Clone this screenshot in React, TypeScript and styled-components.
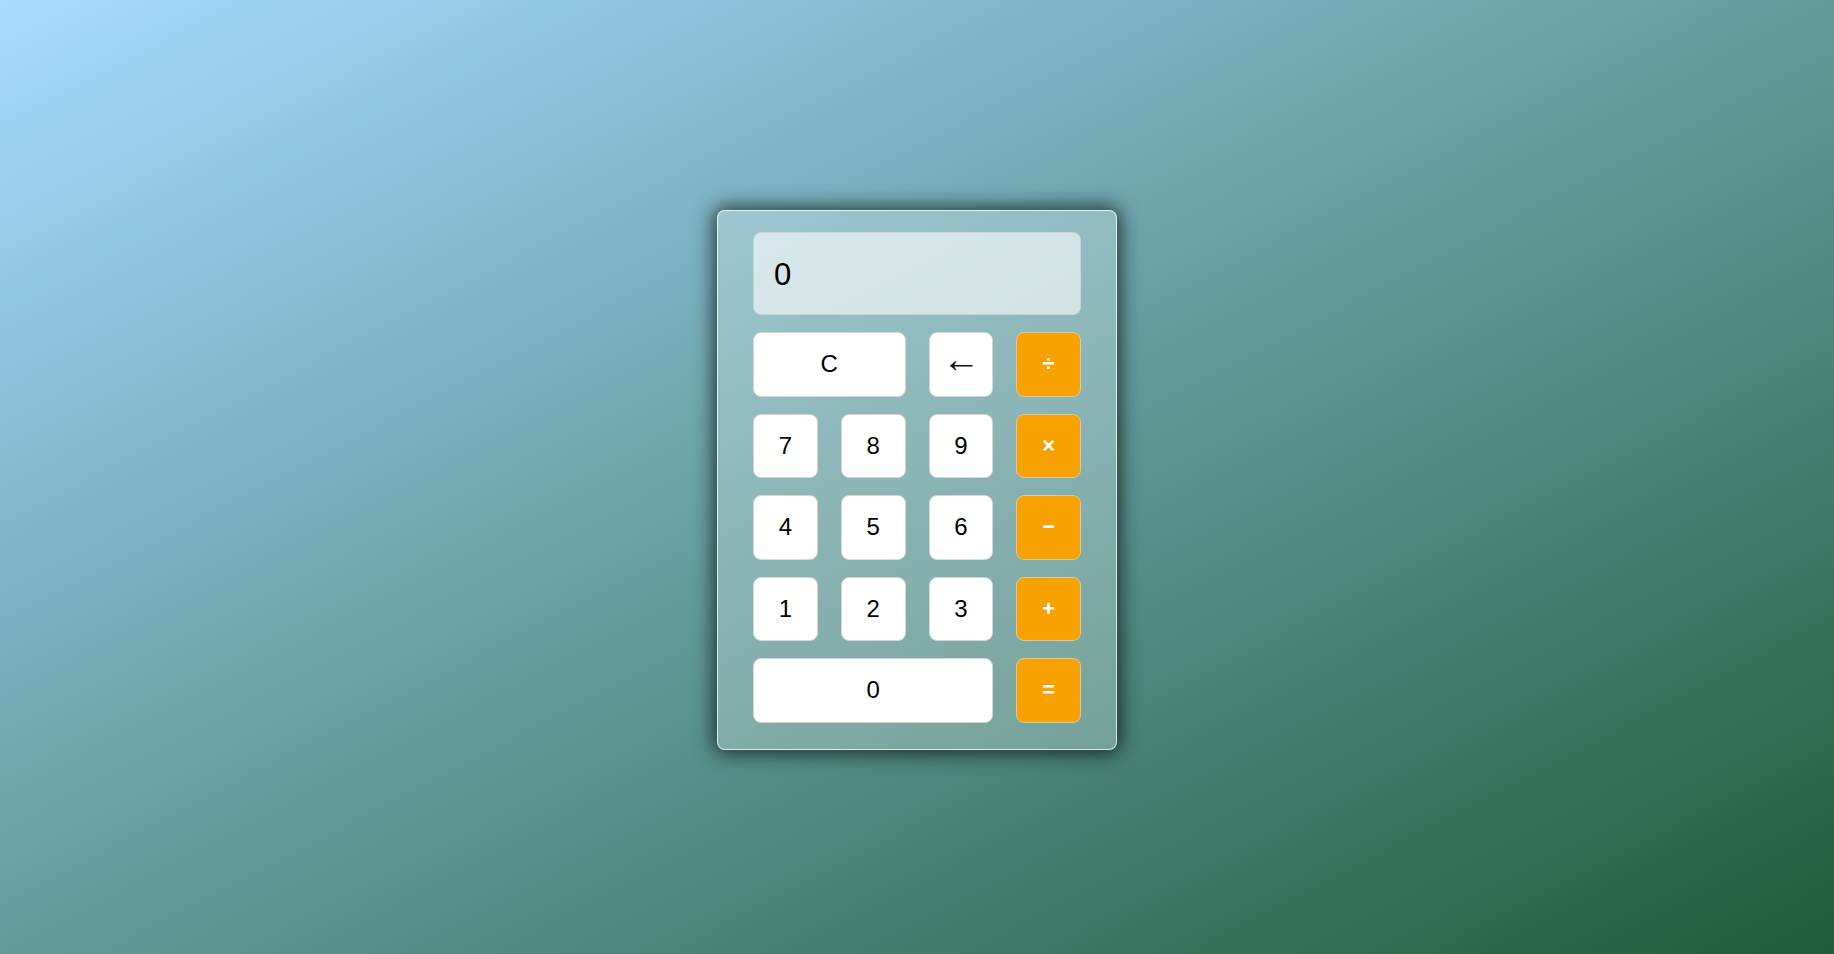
import React, { useState } from "react";
import styled, { createGlobalStyle } from "styled-components";

const Global = createGlobalStyle`
  html, body { margin: 0; padding: 0; height: 100%; }
  body {
    font-family: "Liberation Sans", Arial, sans-serif;
    background: linear-gradient(to bottom right, #a8dbff 0%, #1f5b3a 100%);
    background-attachment: fixed;
  }
  #root { min-height: 100vh; }
`;

const Page = styled.div`
  box-sizing: border-box;
  width: 100vw;
  height: 100vh;
  padding-top: 5px;
  display: flex;
  align-items: center;
  justify-content: center;
`;

const Calculator = styled.div`
  box-sizing: border-box;
  width: 400px;
  height: 540px;
  padding: 21px 35px 26px;
  border: 1px solid rgba(255, 255, 255, 0.75);
  border-radius: 8px;
  background: rgba(255, 255, 255, 0.25);
  box-shadow: 0 0 20px 3px rgba(0, 0, 0, 0.7);
  display: flex;
  flex-direction: column;
  gap: 17px;
`;

const Display = styled.div`
  box-sizing: border-box;
  height: 84px;
  border: 1px solid rgba(200, 210, 212, 0.9);
  border-radius: 8px;
  background: rgba(255, 255, 255, 0.6);
  display: flex;
  align-items: center;
  padding: 4px 20px 0;
  font-size: 31px;
  color: #000;
`;

const Keys = styled.div`
  display: grid;
  grid-template-columns: repeat(4, 1fr);
  grid-auto-rows: 64.5px;
  column-gap: 23px;
  row-gap: 17px;
`;

const Key = styled.button<{ $op?: boolean; $span?: number }>`
  box-sizing: border-box;
  grid-column: span ${(p) => p.$span ?? 1};
  border: 1px solid ${(p) => (p.$op ? "#d8c9a8" : "#d6d6d6")};
  border-radius: 8px;
  background: ${(p) => (p.$op ? "#f7a200" : "#ffffff")};
  color: ${(p) => (p.$op ? "#ffffff" : "#000000")};
  font-family: "Liberation Sans", Arial, sans-serif;
  font-size: ${(p) => (p.$op ? "22px" : "24px")};
  font-weight: ${(p) => (p.$op ? 700 : 400)};
  display: flex;
  align-items: center;
  justify-content: center;
  padding: 0;
  cursor: pointer;
`;

const Arrow = styled.span`
  font-family: "Liberation Sans", "DejaVu Sans", sans-serif;
  font-size: 38px;
  line-height: 1;
  color: #111;
  transform: translateY(-5px);
`;

export default function App() {
  const [value] = useState("0");
  return (
    <>
      <Global />
      <Page>
        <Calculator>
          <Display>{value}</Display>
          <Keys>
            <Key $span={2}>C</Key>
            <Key>
              <Arrow>←</Arrow>
            </Key>
            <Key $op>÷</Key>
            <Key>7</Key>
            <Key>8</Key>
            <Key>9</Key>
            <Key $op>×</Key>
            <Key>4</Key>
            <Key>5</Key>
            <Key>6</Key>
            <Key $op>−</Key>
            <Key>1</Key>
            <Key>2</Key>
            <Key>3</Key>
            <Key $op>+</Key>
            <Key $span={3}>0</Key>
            <Key $op>=</Key>
          </Keys>
        </Calculator>
      </Page>
    </>
  );
}
